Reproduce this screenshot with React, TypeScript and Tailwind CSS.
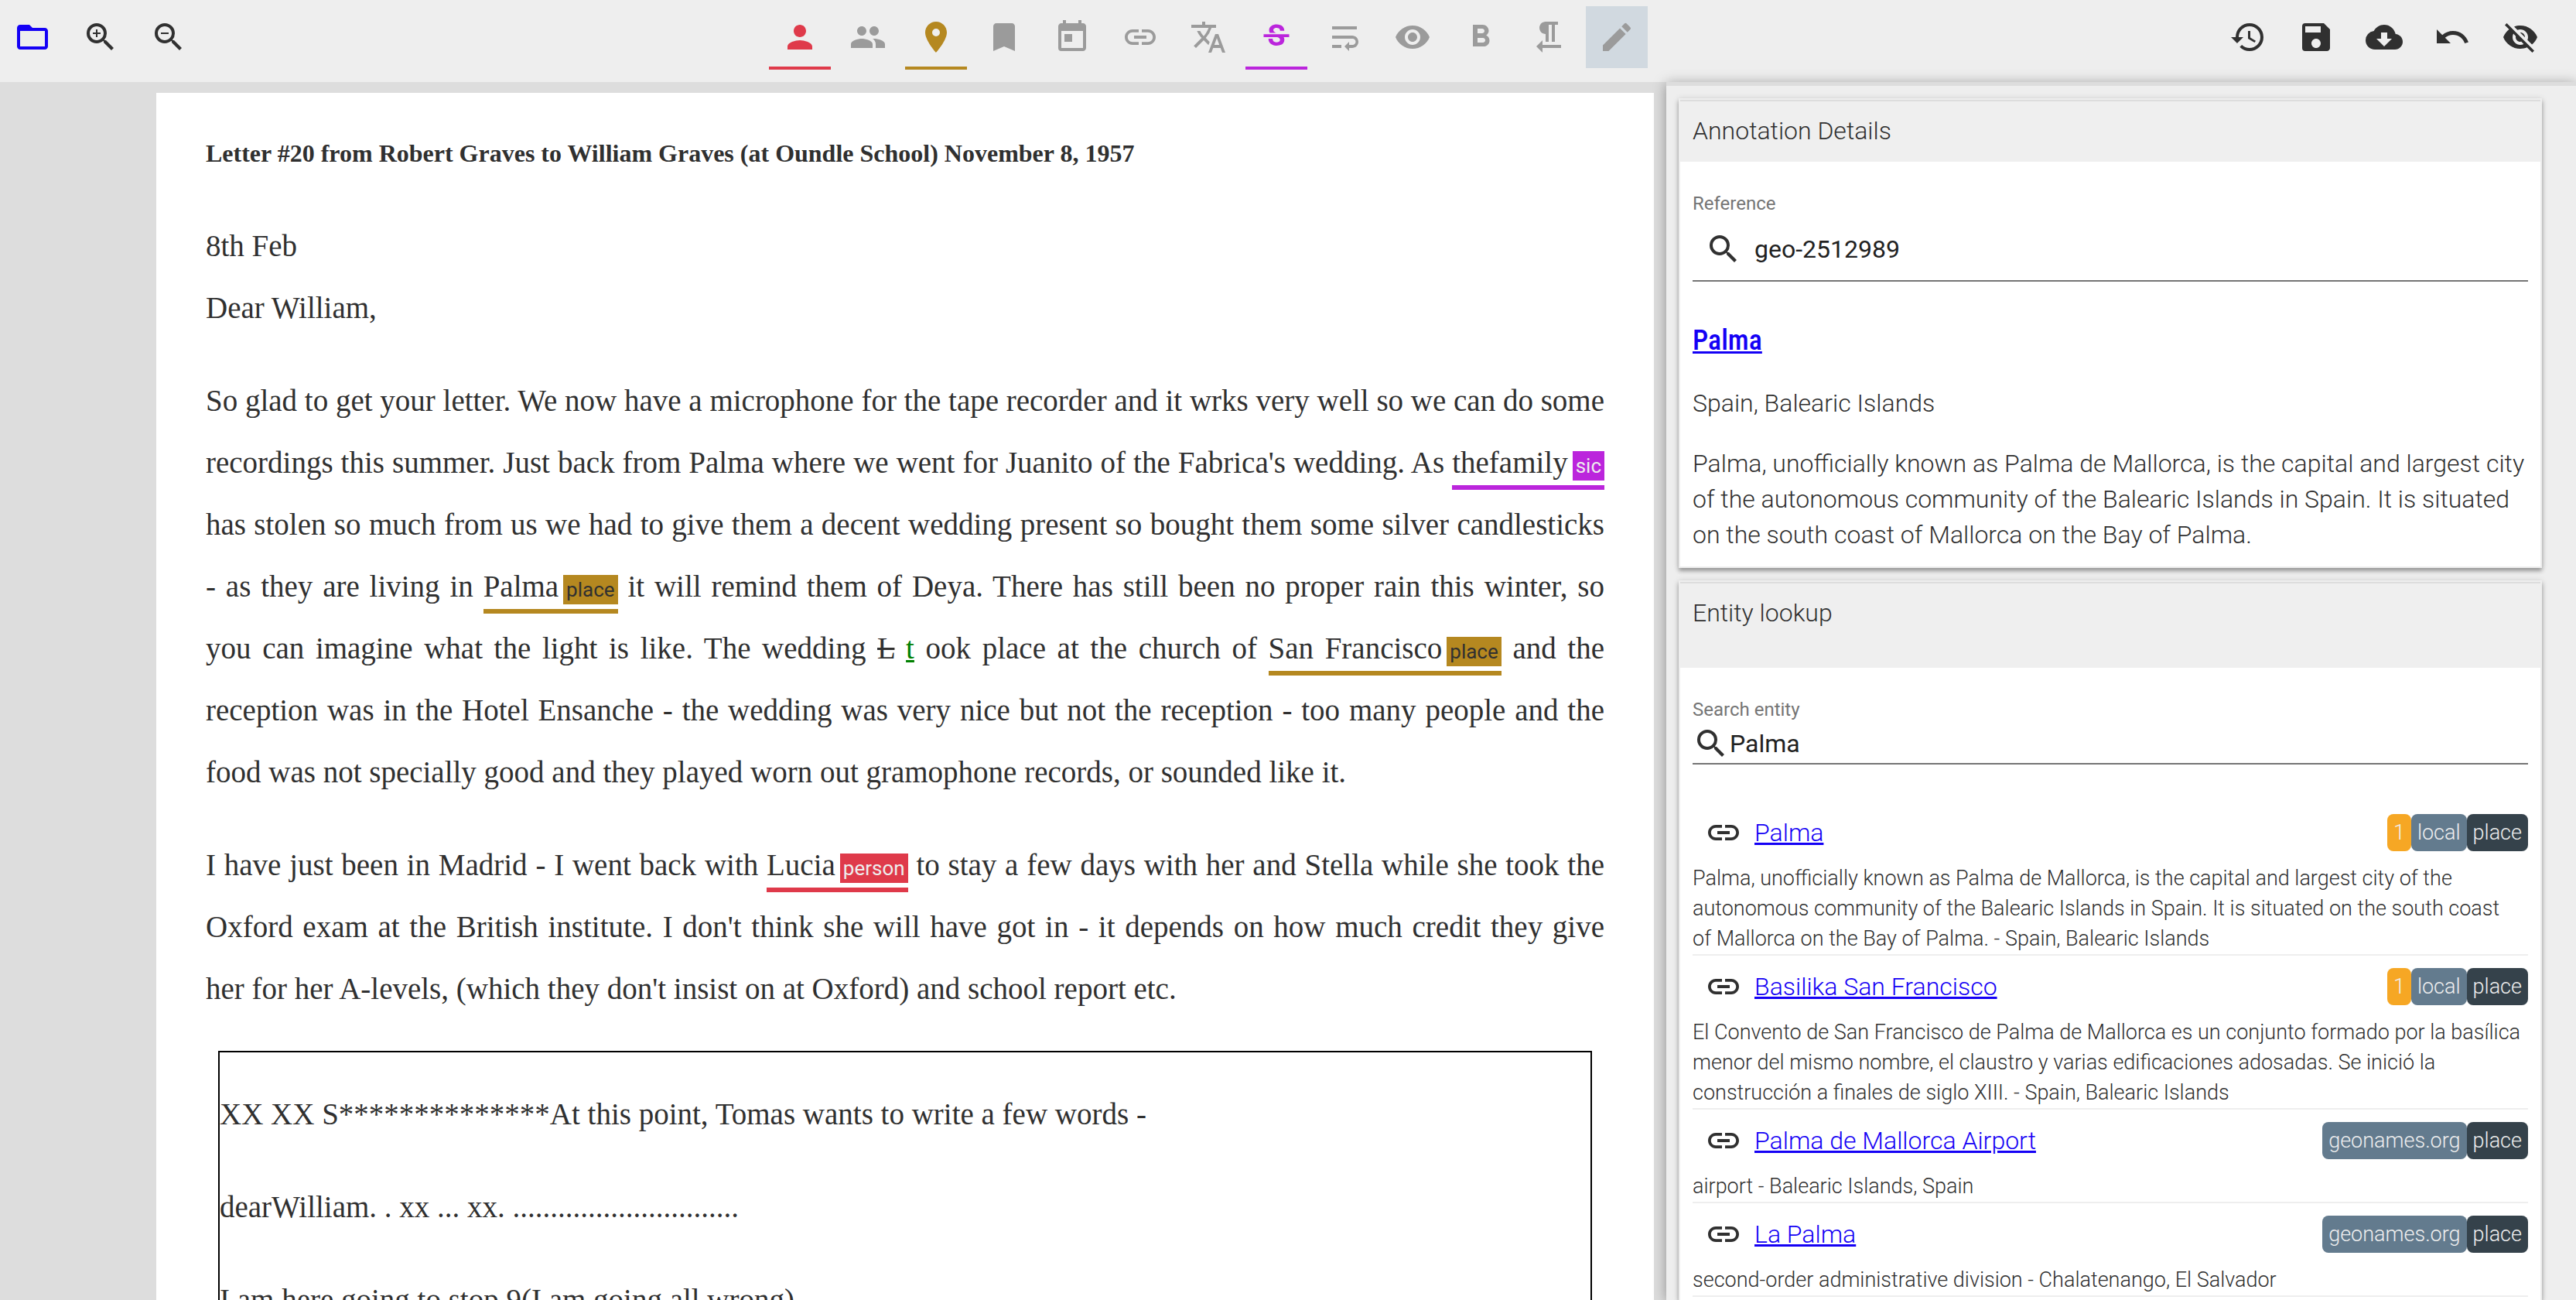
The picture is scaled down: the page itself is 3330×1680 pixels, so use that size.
import type { ReactNode } from "react";
import type { IconType } from "react-icons";
import {
  MdFolderOpen, MdZoomIn, MdZoomOut, MdPerson, MdPeople, MdPlace, MdBookmark, MdToday, MdLink,
  MdTranslate, MdStrikethroughS, MdWrapText, MdRemoveRedEye, MdFormatBold, MdFormatTextdirectionRToL,
  MdEdit, MdHistory, MdSave, MdCloudDownload, MdUndo, MdVisibilityOff, MdSearch,
} from "react-icons/md";

type Tool = { icon: IconType; label: string; look: string; size?: string };

const fileTools: Tool[] = [
  { icon: MdFolderOpen, label: "Open", look: "text-[#1400f5]" },
  { icon: MdZoomIn, label: "Zoom in", look: "text-[#303030]" },
  { icon: MdZoomOut, label: "Zoom out", look: "text-[#303030]" },
];

const markTools: Tool[] = [
  { icon: MdPerson, label: "Person", look: "text-[#df3a4a] border-[#df3a4a]" },
  { icon: MdPeople, label: "Organization", look: "text-[#9b9b9b]" },
  { icon: MdPlace, label: "Place", look: "text-[#b58820] border-[#b58820]" },
  { icon: MdBookmark, label: "Term", look: "text-[#9b9b9b]" },
  { icon: MdToday, label: "Date", look: "text-[#9b9b9b]" },
  { icon: MdLink, label: "Link", look: "text-[#9b9b9b]" },
  { icon: MdTranslate, label: "Foreign", look: "text-[#9b9b9b]" },
  { icon: MdStrikethroughS, label: "Sic", look: "text-[#bb25dc] border-[#bb25dc]", size: "size-11" },
  { icon: MdWrapText, label: "Wrap", look: "text-[#9b9b9b]" },
  { icon: MdRemoveRedEye, label: "Unclear", look: "text-[#9b9b9b]" },
  { icon: MdFormatBold, label: "Bold", look: "text-[#9b9b9b]" },
  { icon: MdFormatTextdirectionRToL, label: "Paragraph", look: "text-[#9b9b9b]" },
  { icon: MdEdit, label: "Edit", look: "text-[#9b9b9b] bg-[#d1d9e0]" },
];

const pageTools: Tool[] = [
  { icon: MdHistory, label: "History", look: "text-[#303030]" },
  { icon: MdSave, label: "Save", look: "text-[#303030]" },
  { icon: MdCloudDownload, label: "Download", look: "text-[#303030]" },
  { icon: MdUndo, label: "Undo", look: "text-[#303030]" },
  { icon: MdVisibilityOff, label: "Hide", look: "text-[#303030]" },
];

function ToolGroup({ tools }: { tools: Tool[] }) {
  return (
    <div className="flex gap-2">
      {tools.map(({ icon: Icon, label, look, size = "size-12" }) => (
        <button
          key={label}
          aria-label={label}
          className={`flex w-20 items-center justify-center ${look} ${look.includes("border-") ? "h-[82px] border-b-4 pt-0.5" : "h-20"}`}
        >
          <Icon className={size} />
        </button>
      ))}
    </div>
  );
}

function Line({ children }: { children: ReactNode }) {
  return <span className="block [text-align-last:justify]">{children}</span>;
}

const tagLooks = {
  sic: ["border-[#bb25dc]", "bg-[#bb25dc] text-[#eeeeee]"],
  place: ["border-[#b58820]", "bg-[#b58820] text-[#303030]"],
  person: ["border-[#df3a4a]", "bg-[#df3a4a] text-[#eeeeee]"],
};

function Tag({ kind, children }: { kind: keyof typeof tagLooks; children: ReactNode }) {
  const [line, badge] = tagLooks[kind];
  return (
    <span className={`border-b-[6px] pb-2 ${line}`}>
      {children}
      <span className={`ml-1.5 px-1 py-1 font-[Roboto,sans-serif] text-[26px] leading-none font-normal ${badge}`}>{kind}</span>
    </span>
  );
}

function Letter() {
  return (
    <article className="mr-4 ml-[202px] min-w-0 flex-1 overflow-hidden bg-white px-16 font-['Liberation_Serif',serif] text-[39px] leading-[80px] font-normal text-[#303030]">
      <h1 className="mt-[38px] text-[32px] font-bold">
        Letter #20 from Robert Graves to William Graves (at Oundle School) November 8, 1957
      </h1>
      <p className="mt-10">8th Feb</p>
      <p>Dear William,</p>
      <p className="mt-10">
        <Line>So glad to get your letter. We now have a microphone for the tape recorder and it wrks very well so we can do some</Line>
        <Line>recordings this summer. Just back from Palma where we went for Juanito of the Fabrica's wedding. As <Tag kind="sic">thefamily</Tag></Line>
        <Line>has stolen so much from us we had to give them a decent wedding present so bought them some silver candlesticks</Line>
        <Line>- as they are living in <Tag kind="place">Palma</Tag> it will remind them of Deya. There has still been no proper rain this winter, so</Line>
        <Line>
          you can imagine what the light is like. The wedding <del>L</del> <ins className="text-[#008000]">t</ins> ook place at the church of{" "}
          <Tag kind="place">San Francisco</Tag> and the
        </Line>
        <Line>reception was in the Hotel Ensanche - the wedding was very nice but not the reception - too many people and the</Line>
        <span className="block">food was not specially good and they played worn out gramophone records, or sounded like it.</span>
      </p>
      <p className="mt-10">
        <Line>I have just been in Madrid - I went back with <Tag kind="person">Lucia</Tag> to stay a few days with her and Stella while she took the</Line>
        <Line>Oxford exam at the British institute. I don't think she will have got in - it depends on how much credit they give</Line>
        <span className="block">her for her A-levels, (which they don't insist on at Oxford) and school report etc.</span>
      </p>
      <div className="mx-4 mt-10 border-2 border-black">
        <p className="mt-10">XX XX S**************At this point, Tomas wants to write a few words -</p>
        <p className="mt-10">dearWilliam. . xx ... xx. ..............................</p>
        <p className="my-10">I am here going to stop 9(I am going all wrong)</p>
      </div>
    </article>
  );
}

function Card({ title, fill, children }: { title: string; fill?: boolean; children: ReactNode }) {
  return (
    <section className={`border-2 border-[#eeeeee] bg-white shadow-[0_4px_5px_rgba(0,0,0,0.3),0_1px_8px_rgba(0,0,0,0.15)] ${fill ? "grow border-b-0" : ""}`}>
      <h2 className={`border-t-2 border-[#dddddd] bg-[#efefef] px-4 pt-[15px] leading-[46px] ${fill ? "h-[111px]" : "h-20"}`}>{title}</h2>
      <div className="px-4">{children}</div>
    </section>
  );
}

type Entity = { name: string; count?: number; source: string; text: string };

const entities: Entity[] = [
  {
    name: "Palma", count: 1, source: "local",
    text: "Palma, unofficially known as Palma de Mallorca, is the capital and largest city of the autonomous community of the Balearic Islands in Spain. It is situated on the south coast of\u00a0Mallorca on the Bay of Palma. - Spain, Balearic Islands",
  },
  {
    name: "Basilika San Francisco", count: 1, source: "local",
    text: "El Convento de San Francisco de Palma de Mallorca es un conjunto formado por la basílica menor del mismo nombre, el claustro y varias edificaciones adosadas. Se inició la construcción a finales de siglo XIII. - Spain, Balearic Islands",
  },
  { name: "Palma de Mallorca Airport", source: "geonames.org", text: "airport - Balearic Islands, Spain" },
  { name: "La Palma", source: "geonames.org", text: "second-order administrative division - Chalatenango, El Salvador" },
];

function EntityRow({ name, count, source, text }: Entity) {
  return (
    <li className="border-b-2 border-[#eeeeee]">
      <div className="flex h-20 items-center">
        <button aria-label={`Link ${name}`} className="flex size-20 items-center justify-center">
          <MdLink className="size-12" />
        </button>
        <a href="#" className="flex-1 text-[#1400f5] underline">{name}</a>
        <div className="flex text-[27px] leading-[48px] text-[#eeeeee]">
          {count && <span className="rounded-lg bg-[#f6a724] px-2">{count}</span>}
          <span className="rounded-lg bg-[#637b8e] px-2">{source}</span>
          <span className="rounded-lg bg-[#35424b] px-2">place</span>
        </div>
      </div>
      <p className="text-[27px] leading-[39px]">{text}</p>
    </li>
  );
}

function SidePanel() {
  return (
    <aside className="flex w-[1176px] flex-col gap-4 border-t-[5px] border-[#dddddd] bg-[#eeeeee] pt-4 pr-11 pl-4 shadow-[0_2px_16px_rgba(0,0,0,0.35)]">
      <Card title="Annotation Details">
        <label htmlFor="reference" className="mt-[35px] block text-2xl leading-[38px] font-normal text-[#757575]">Reference</label>
        <div className="flex h-[82px] items-center border-b-2 border-[#757575]">
          <button aria-label="Search reference" className="flex size-20 items-center justify-center">
            <MdSearch className="size-12" />
          </button>
          <input id="reference" defaultValue="geo-2512989" className="min-w-0 flex-1 font-normal text-[#212121] outline-none" />
        </div>
        <h3 className="mt-[46px] font-['Roboto_Condensed',Roboto,sans-serif] text-[36px] leading-[60px] font-medium">
          <a href="#" className="text-[#1400f5] underline">Palma</a>
        </h3>
        <p className="mt-7 leading-[46px]">Spain, Balearic Islands</p>
        <p className="mt-8 pb-[18px] leading-[46px]">
          Palma, unofficially known as Palma de Mallorca, is the capital and largest city of the autonomous community of the Balearic Islands in Spain. It is situated on the south coast of Mallorca on the Bay of Palma.
        </p>
      </Card>
      <Card title="Entity lookup" fill>
        <label htmlFor="entity" className="mt-[35px] block text-2xl leading-[38px] font-normal text-[#757575]">Search entity</label>
        <div className="flex h-[52px] items-center border-b-2 border-[#757575]">
          <MdSearch className="size-12" />
          <input id="entity" defaultValue="Palma" className="min-w-0 flex-1 font-normal text-[#212121] outline-none" />
        </div>
        <ul className="mt-12">
          {entities.map((entity) => <EntityRow key={entity.name} {...entity} />)}
        </ul>
      </Card>
    </aside>
  );
}

export default function App() {
  return (
    <div className="flex h-screen flex-col overflow-hidden bg-[#dddddd] font-[Roboto,sans-serif] text-[32px] font-light text-[#303030]">
      <header className="flex h-[106px] shrink-0 items-start justify-between bg-[#eeeeee] pt-2 pr-8 pl-0.5">
        <ToolGroup tools={fileTools} />
        <ToolGroup tools={markTools} />
        <ToolGroup tools={pageTools} />
      </header>
      <main className="flex min-h-0 flex-1">
        <div className="flex min-w-0 flex-1 pt-3.5"><Letter /></div>
        <SidePanel />
      </main>
    </div>
  );
}
